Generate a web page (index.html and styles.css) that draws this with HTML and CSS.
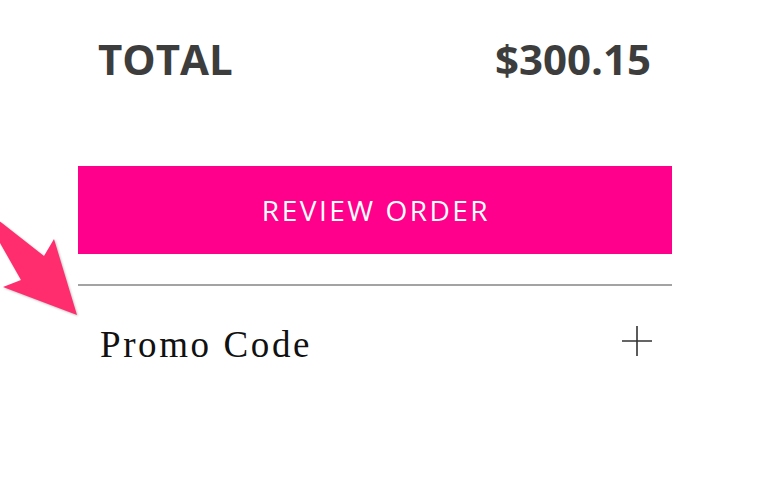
FILE: index.html
```html
<!DOCTYPE html>
<html>
<head>
<meta charset="utf-8">
<link rel="stylesheet" href="styles.css">
</head>
<body>
<div class="summary">
  <div class="total-row">
    <span class="total-label">TOTAL</span>
    <span class="total-value">$300.15</span>
  </div>
  <button class="review-btn">REVIEW ORDER</button>
  <div class="divider"></div>
  <div class="promo-row">
    <span class="promo-label">Promo Code</span>
    <svg class="plus" width="32" height="32" viewBox="0 0 32 32"><path d="M1 16H31M16 1V31" stroke="#333" stroke-width="1.6" fill="none"/></svg>
  </div>
</div>
<svg class="arrow" width="90" height="330" viewBox="0 0 90 330">
  <polygon points="0,221.5 44,256 54,239 77,315 3,287 21,280 0,243" fill="#ff2d6e"/>
</svg>
</body>
</html>
```
FILE: styles.css
```css
html, body {
  margin: 0;
  padding: 0;
  background: #fff;
}
body {
  width: 770px;
  height: 482px;
  position: relative;
  overflow: hidden;
}
.summary {
  margin-left: 78px;
  width: 594px;
  padding-top: 30px;
}
.total-row {
  display: flex;
  justify-content: space-between;
  padding: 0 21px 0 20px;
  font-family: "Open Sans", sans-serif;
  font-weight: 700;
  font-size: 42px;
  line-height: 57px;
  color: #3d3d3d;
}
.review-btn {
  display: flex;
  align-items: center;
  justify-content: center;
  width: 100%;
  height: 88px;
  margin-top: 79px;
  border: 0;
  padding: 0 0 1px 2px;
  background: #ff008c;
  color: #fff;
  font-family: "Open Sans", sans-serif;
  font-size: 28px;
  letter-spacing: 2.5px;
}
.divider {
  height: 2px;
  margin-top: 30px;
  background: #a3a3a3;
}
.promo-row {
  display: flex;
  justify-content: space-between;
  align-items: flex-start;
  padding: 0 19px 0 22px;
  margin-top: 39px;
}
.promo-label {
  font-family: "Liberation Serif", serif;
  font-size: 37px;
  letter-spacing: 2.6px;
  color: #111;
  line-height: 40px;
}
.plus {
  display: block;
}
.arrow {
  position: absolute;
  left: 0;
  top: 0;
  filter: drop-shadow(1px 1px 1px rgba(0,0,0,0.25));
}
```
